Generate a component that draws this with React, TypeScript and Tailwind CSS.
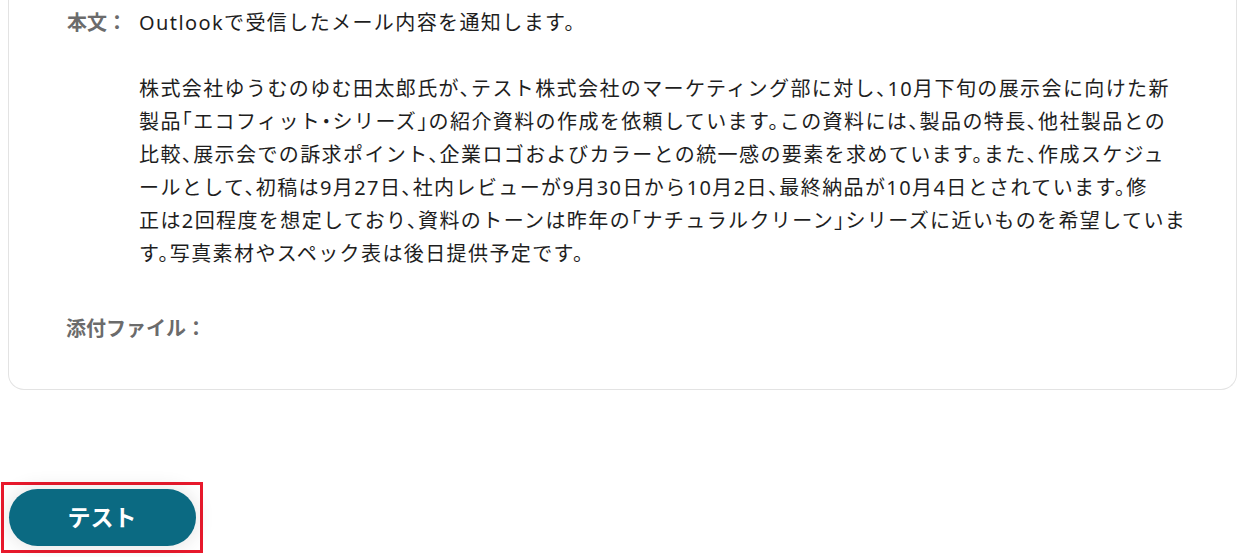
import React from "react";

const lines = [
  "株式会社ゆうむのゆむ田太郎氏が、テスト株式会社のマーケティング部に対し、10月下旬の展示会に向けた新",
  "製品「エコフィット・シリーズ」の紹介資料の作成を依頼しています。この資料には、製品の特長、他社製品との",
  "比較、展示会での訴求ポイント、企業ロゴおよびカラーとの統一感の要素を求めています。また、作成スケジュ",
  "ールとして、初稿は9月27日、社内レビューが9月30日から10月2日、最終納品が10月4日とされています。修",
  "正は2回程度を想定しており、資料のトーンは昨年の「ナチュラルクリーン」シリーズに近いものを希望していま",
  "す。写真素材やスペック表は後日提供予定です。",
];

export default function App() {
  const font = {
    fontFamily: '"Noto Sans", "Noto Sans CJK JP", sans-serif',
  } as React.CSSProperties;
  return (
    <div className="w-[1245px] h-[557px] overflow-hidden bg-white" style={font}>
      <div className="mx-2 w-[1229px] rounded-b-[16px] border-x border-b border-[#e3e3e3] pt-[6px] pb-[44px]">
        <div className="flex">
          <div className="w-[130px] shrink-0 pl-[58px] text-[20px] leading-[33px] font-semibold text-[#6b6b6b]">
            本文：
          </div>
          <div className="text-[20px] leading-[33px] tracking-[1.4px] text-[#1e1e1e] whitespace-nowrap [font-feature-settings:'halt']">
            <div>Outlookで受信したメール内容を通知します。</div>
            <div className="h-[33px]" />
            {lines.map((l, i) => (
              <div key={i}>{l}</div>
            ))}
          </div>
        </div>
        <div className="mt-[42px] pl-[57px] text-[20px] leading-[33px] font-semibold text-[#6b6b6b]">
          添付ファイル：
        </div>
      </div>
      <div className="mt-[92px] ml-[1px] w-[202px] h-[71px] border-[3px] border-[#e8192c] flex items-center justify-center">
        <button className="w-[187px] h-[57px] rounded-full bg-[#0b6a82] text-white text-[23px] font-bold shadow-[0_0_20px_rgba(0,0,0,0.12)]">
          テスト
        </button>
      </div>
    </div>
  );
}
